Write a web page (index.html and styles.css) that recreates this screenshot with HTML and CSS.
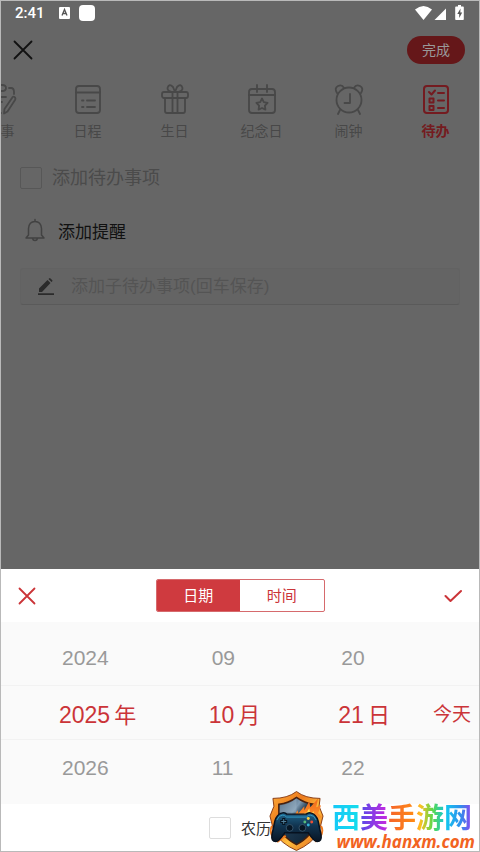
FILE: index.html
```html
<!DOCTYPE html>
<html lang="zh-CN">
<head>
<meta charset="utf-8">
<meta name="viewport" content="width=device-width, initial-scale=1">
<title>待办</title>
<link rel="stylesheet" href="styles.css">
</head>
<body>
<main class="screen">
  <div class="status">
    <span class="clock">2:41</span>
    <svg class="status-app" width="11" height="12" viewBox="0 0 11 12"><rect width="11" height="12" rx="1" fill="#fff"/><path d="M3 8.5 5.5 2.5 8 8.5M4 6.5h3" fill="none" stroke="#555" stroke-width="1.3"/></svg>
    <span class="status-block"></span>
    <svg class="status-signal" width="50" height="16" viewBox="0 0 50 16" fill="#fff"><path d="M0 4.500Q8.500-2.500 17 4.500L8.500 15z"/><path d="M31 3.500V15H19.500z"/><path d="M41 1.500h2V0h3v1.500h2q.8 0 .8.8v12q0 .8-.8.8h-7q-.8 0-.8-.8v-12q0-.8.800-.8z"/><path d="M45.500 3.500 42.300 9h1.900v4l3-5.500h-1.900z" fill="#555"/></svg>
  </div>

  <header class="bar">
    <button class="icon-button" type="button" aria-label="关闭">
      <svg width="20" height="20" viewBox="0 0 20 20" fill="none" stroke="#111" stroke-width="1.8" stroke-linecap="round"><path d="M1.500 1.500l17 17M18.500 1.500l-17 17"/></svg>
    </button>
    <button class="done" type="button">完成</button>
  </header>

  <nav class="tabs">
    <button class="tab" type="button">
      <svg width="32" height="32" viewBox="0 0 32 32"><path d="M9 5H6q-3 0-3 3v18q0 4 4 4h9M24 5h2q3 0 3 4v2M11 5q0-3 3-3h3q4 0 4 3t-4 3h-3q-3 0-3-3zM8 14h13M8 19h9M8 24h6M27 15q1-2 2.500-1t.5 3l-7.500 11.500-3.500 2 .5-4.500z"/></svg>
      <span>故事</span>
    </button>
    <button class="tab" type="button">
      <svg width="32" height="32" viewBox="0 0 32 32"><rect x="4" y="3" width="24" height="27" rx="3"/><path d="M4 9.500h24M10 17.500h1.500M15 17.500h8M10 24h1.500M15 24h8"/></svg>
      <span>日程</span>
    </button>
    <button class="tab" type="button">
      <svg width="32" height="32" viewBox="0 0 32 32"><rect x="3" y="9" width="26" height="6" rx="2"/><path d="M6 15v13q0 2 2 2h16q2 0 2-2V15M13.500 9v21M18.500 9v21M16 9Q8 9 8.500 5 10 0 14 4l2 5Q24 9 23.500 5 22 0 18 4z"/></svg>
      <span>生日</span>
    </button>
    <button class="tab" type="button">
      <svg width="32" height="32" viewBox="0 0 32 32"><rect x="3" y="6" width="26" height="24" rx="3"/><path d="M3 12h26M11 2v7M21 2v7M16 15.500l1.800 3.600 3.800.7-2.700 2.800.5 4-3.400-1.600-3.400 1.600.5-4-2.700-2.800 3.800-.7z"/></svg>
      <span>纪念日</span>
    </button>
    <button class="tab" type="button">
      <svg width="32" height="32" viewBox="0 0 32 32"><circle cx="16" cy="17" r="12.500"/><path d="M17 11v9h-5.500M7 27l-2 4M25 27l2 4M4 10Q1 5 5 3t6 2M28 10q3-5-1-7t-6 2"/></svg>
      <span>闹钟</span>
    </button>
    <button class="tab tab-active" type="button">
      <svg width="32" height="32" viewBox="0 0 32 32"><rect x="4" y="3" width="24" height="27" rx="3"/><path d="M9 9l2.500 2.500L15 7.500M18 10h6M9.500 15.500h4v4h-4zM18 17.500h6M9.500 23h4v4h-4zM18 25h6"/></svg>
      <span>待办</span>
    </button>
  </nav>

  <section class="form">
    <div class="todo">
      <input class="check check-dim" type="checkbox" aria-label="完成待办">
      <input class="field field-large" type="text" placeholder="添加待办事项" aria-label="添加待办事项">
    </div>
    <button class="remind" type="button">
      <svg width="22" height="24" viewBox="0 0 22 24" fill="none" stroke="#424242" stroke-width="1.500" stroke-linecap="round" stroke-linejoin="round"><path d="M11 1.500V3M4.500 17V10.500Q5 3.500 11 3.500t6.500 7V17l2.500 3H2zM8.500 20.500q.5 2 2.500 2t2.500-2"/></svg>
      <span>添加提醒</span>
    </button>
    <div class="subtask">
      <svg width="18" height="18" viewBox="0 0 18 18" fill="#2b2b2b"><path d="M2 14V10.500L10.500 2l3 3L5 14zM11.500 1l.6-.6q.7-.7 1.400 0l1.600 1.600q.7.700 0 1.400l-.6.6zM1 15.300h16v1.700H1z"/></svg>
      <input class="field" type="text" placeholder="添加子待办事项(回车保存)" aria-label="添加子待办事项">
    </div>
  </section>

  <section class="sheet">
    <div class="sheet-head">
      <button class="icon-button" type="button" aria-label="取消">
        <svg width="18" height="18" viewBox="0 0 18 18" fill="none" stroke="#cb3438" stroke-width="1.800" stroke-linecap="round"><path d="M1.500 1.500l15 15M16.500 1.500l-15 15"/></svg>
      </button>
      <div class="segments">
        <button class="segment segment-on" type="button">日期</button>
        <button class="segment" type="button">时间</button>
      </div>
      <button class="icon-button" type="button" aria-label="确定">
        <svg width="18" height="14" viewBox="0 0 18 14" fill="none" stroke="#cb3438" stroke-width="2" stroke-linecap="round" stroke-linejoin="round"><path d="M1.500 7l5 5L17 2"/></svg>
      </button>
    </div>
    <div class="wheel">
      <div class="row"><span class="num">2024</span><span class="num">09</span><span class="num">20</span></div>
      <div class="row row-now">
        <span><b class="num">2025</b>年</span><span><b class="num">10</b>月</span><span><b class="num">21</b>日</span>
        <button class="today" type="button">今天</button>
      </div>
      <div class="row"><span class="num">2026</span><span class="num">11</span><span class="num">22</span></div>
    </div>
    <label class="lunar"><input class="check" type="checkbox">农历</label>
  </section>
</main>

<div class="mark">
  <svg width="55" height="62" viewBox="0 0 56 62">
    <defs>
      <linearGradient id="rim" x1="0" y1="0" x2="1" y2="1"><stop offset="0" stop-color="#ffb13c"/><stop offset=".35" stop-color="#ec7a1c"/><stop offset=".6" stop-color="#ffbe3e"/><stop offset="1" stop-color="#df5a16"/></linearGradient>
      <linearGradient id="steel" x1="0" y1="0" x2="1" y2="1"><stop offset="0" stop-color="#263f57"/><stop offset=".35" stop-color="#809bb2"/><stop offset=".5" stop-color="#1b354b"/><stop offset="1" stop-color="#0b1e30"/></linearGradient>
      <linearGradient id="fire" x1="0" y1="0" x2="0" y2="1"><stop offset="0" stop-color="#f1661a"/><stop offset="1" stop-color="#ffa030"/></linearGradient>
      <linearGradient id="pad" x1="0" y1="0" x2="0" y2="1"><stop offset="0" stop-color="#20658b"/><stop offset=".45" stop-color="#113450"/><stop offset="1" stop-color="#091524"/></linearGradient>
    </defs>
    <path d="M28 1q9 7 24 7l-1 8 4 10-4 16Q44 54 28 61 12 54 5 42L1 26l4-10-1-8q15 0 24-7z" fill="url(#rim)" stroke="#8a3c14" stroke-width="1"/>
    <path d="M28 7q8 6 18 7v19q-2 14-18 22Q12 47 10 33V14q10-1 18-7z" fill="url(#steel)" stroke="#49200d" stroke-width="1.500"/>
    <path d="M28 8v14H11v-7q10-1 17-7z" fill="#a4bccd" opacity=".4"/>
    <path d="M25 27l4-7 1 3 6-7v4l5-9 1 6 8-9-2 9 5-2-3 8 4 4-8 6z" fill="url(#fire)"/>
    <path d="M33 27l4-5v3l4-7 1 6 4-3-2 7z" fill="#ffe05b"/>
    <path d="M3 36q-3 5 1 12l5 4 8-6M53 36q3 5-1 12l-5 4" fill="none" stroke="#f07b20" stroke-width="2"/>
    <path d="M13 23q3-1 5 1h20q2-2 5-1 5 1 7 8l3 14q1 7-4 7-3 0-9-9H16q-6 9-9 9-5 0-4-7l3-14q2-7 7-8z" fill="url(#pad)" stroke="#06111f" stroke-width="1.500"/>
    <path d="M8 30q2-5 6-5 2 0 4 2h20q2-2 4-2 4 0 6 5" fill="none" stroke="#3299c2" stroke-width="1"/>
    <path d="M15 28v7M11.500 31.500h7" stroke="#06121e" stroke-width="3"/>
    <path d="M15 29v5M12.500 31.500h5" stroke="#52819b" stroke-width="1"/>
    <circle cx="21" cy="38" r="3.500" fill="#071624" stroke="#34536a"/><circle cx="34" cy="38" r="3.500" fill="#071624" stroke="#34536a"/>
    <circle cx="40" cy="28.500" r="1.500" fill="#ffd344"/><circle cx="43.500" cy="32" r="1.500" fill="#ef4e34"/><circle cx="40" cy="35" r="1.500" fill="#34b4d8"/><circle cx="36.500" cy="32" r="1.500" fill="#58bc7c"/>
  </svg>
  <div class="mark-text"><strong>西美手游网</strong><em>www.hanxm.com</em></div>
</div>
</body>
</html>
```
FILE: styles.css
```css
* { box-sizing: border-box; }

body {
  margin: 0;
  font-family: "Liberation Sans", "Noto Sans CJK SC", sans-serif;
  color: #111;
}

button {
  margin: 0;
  padding: 0;
  border: 0;
  background: none;
  color: inherit;
  font: inherit;
}

svg { display: block; flex: none; }

.screen {
  display: flex;
  flex-direction: column;
  min-height: 100vh;
  border: 1px solid #b9b9b9;
  background: #666;
  overflow: hidden;
}

.status {
  display: flex;
  align-items: center;
  height: 24px;
  padding: 0 14px;
}

.clock {
  margin-right: 14px;
  color: #fff;
  font: 500 15px/24px Roboto, sans-serif;
}

.status-block {
  width: 16px;
  height: 16px;
  margin-left: 9px;
  border-radius: 4px;
  background: #fff;
}

.status-signal { margin-left: auto; }

.bar {
  display: flex;
  align-items: center;
  justify-content: space-between;
  height: 50px;
  padding: 0 14px 0 12px;
}

.done {
  width: 58px;
  height: 28px;
  border-radius: 14px;
  background: #651719;
  color: #999;
  font-size: 14px;
  line-height: 20px;
}

.tabs {
  display: flex;
  justify-content: flex-end;
  overflow: hidden;
  padding-top: 8px;
}

.tab {
  display: flex;
  flex: none;
  flex-direction: column;
  align-items: center;
  gap: 4px;
  width: 87px;
  color: #484848;
  font-size: 14px;
  line-height: 24px;
}

.tab svg {
  fill: none;
  stroke: currentColor;
  stroke-width: 1.8;
  stroke-linecap: round;
  stroke-linejoin: round;
}

.tab-active { color: #741b20; font-weight: bold; }
.tab-active svg { stroke-width: 2; }

.form {
  display: flex;
  flex-direction: column;
  padding: 21px 19px 0;
}

.todo { display: flex; align-items: center; gap: 10px; height: 28px; }

.check {
  appearance: none;
  flex: none;
  width: 22px;
  height: 22px;
  margin: 0;
  border: 1px solid #ddd;
  border-radius: 2px;
  background: #fff;
}

.check-dim { border-color: #575757; background: transparent; }

.field {
  flex: 1;
  min-width: 0;
  padding: 0;
  border: 0;
  outline: 0;
  background: none;
  font: 17px/28px "Liberation Sans", "Noto Sans CJK SC", sans-serif;
}

.field::placeholder { color: #545454; opacity: 1; }
.field-large { font-size: 18px; }
.field-large::placeholder { color: #4b4b4b; }

.remind {
  display: flex;
  align-items: center;
  gap: 12px;
  height: 28px;
  margin: 24px 0 24px 4px;
  font-size: 17px;
}

.subtask {
  display: flex;
  align-items: center;
  gap: 16px;
  height: 37px;
  padding: 0 16px;
  border: 1px solid #626262;
  border-bottom-color: #5a5a5a;
  border-radius: 3px;
  background: #646464;
}

.sheet { margin-top: auto; background: #fff; }

.sheet-head {
  display: flex;
  align-items: center;
  justify-content: space-between;
  height: 53px;
  padding: 0 17px;
}

.segments {
  display: flex;
  width: 169px;
  height: 33px;
  border: 1px solid #d66a6d;
  border-radius: 2px;
  overflow: hidden;
}

.segment { flex: 1; color: #cb3438; font-size: 15px; line-height: 20px; }
.segment-on { background: #cf3a3f; color: #fff; }

.wheel { padding: 8px 0 9px; background: #fafafa; }

.row {
  display: grid;
  grid-template-columns: 150fr 130fr 95fr 46fr;
  align-items: center;
  height: 55px;
  padding-left: 58px;
  color: #999;
  font-size: 22px;
}

.row > .num { padding-left: 3px; font-size: 21px; }

.row-now {
  border: solid #f2f2f2;
  border-width: 1px 0;
  color: #cb3438;
}

.row-now .num { margin-right: 4px; font-size: 23px; font-weight: normal; }

.today { justify-self: start; font-size: 19px; white-space: nowrap; }

.lunar {
  display: flex;
  align-items: center;
  justify-content: center;
  gap: 10px;
  height: 47px;
  font-size: 15px;
  color: #333;
}

.mark {
  position: absolute;
  right: 5px;
  bottom: 0;
  display: flex;
  align-items: flex-end;
}

.mark-text { display: flex; flex-direction: column; width: 143px; margin-left: 8px; }

.mark strong {
  align-self: flex-start;
  font: bold 28px/30px "Noto Sans CJK SC", sans-serif;
  background: linear-gradient(90deg, #15c8f8 0%, #15dcec 19%, #5a48e8 21%, #c42be0 39%, #f5642b 41%, #ff8a14 59%, #ffc020 63%, #58d94c 72%, #22c9c0 79%, #14c4f0 82%, #318dec 92%, #9042ef 100%);
  background-clip: text;
  -webkit-background-clip: text;
  color: transparent;
}

.mark em {
  align-self: flex-end;
  color: #f26322;
  font: italic bold 17px/21px "Open Sans", sans-serif;
}
```
